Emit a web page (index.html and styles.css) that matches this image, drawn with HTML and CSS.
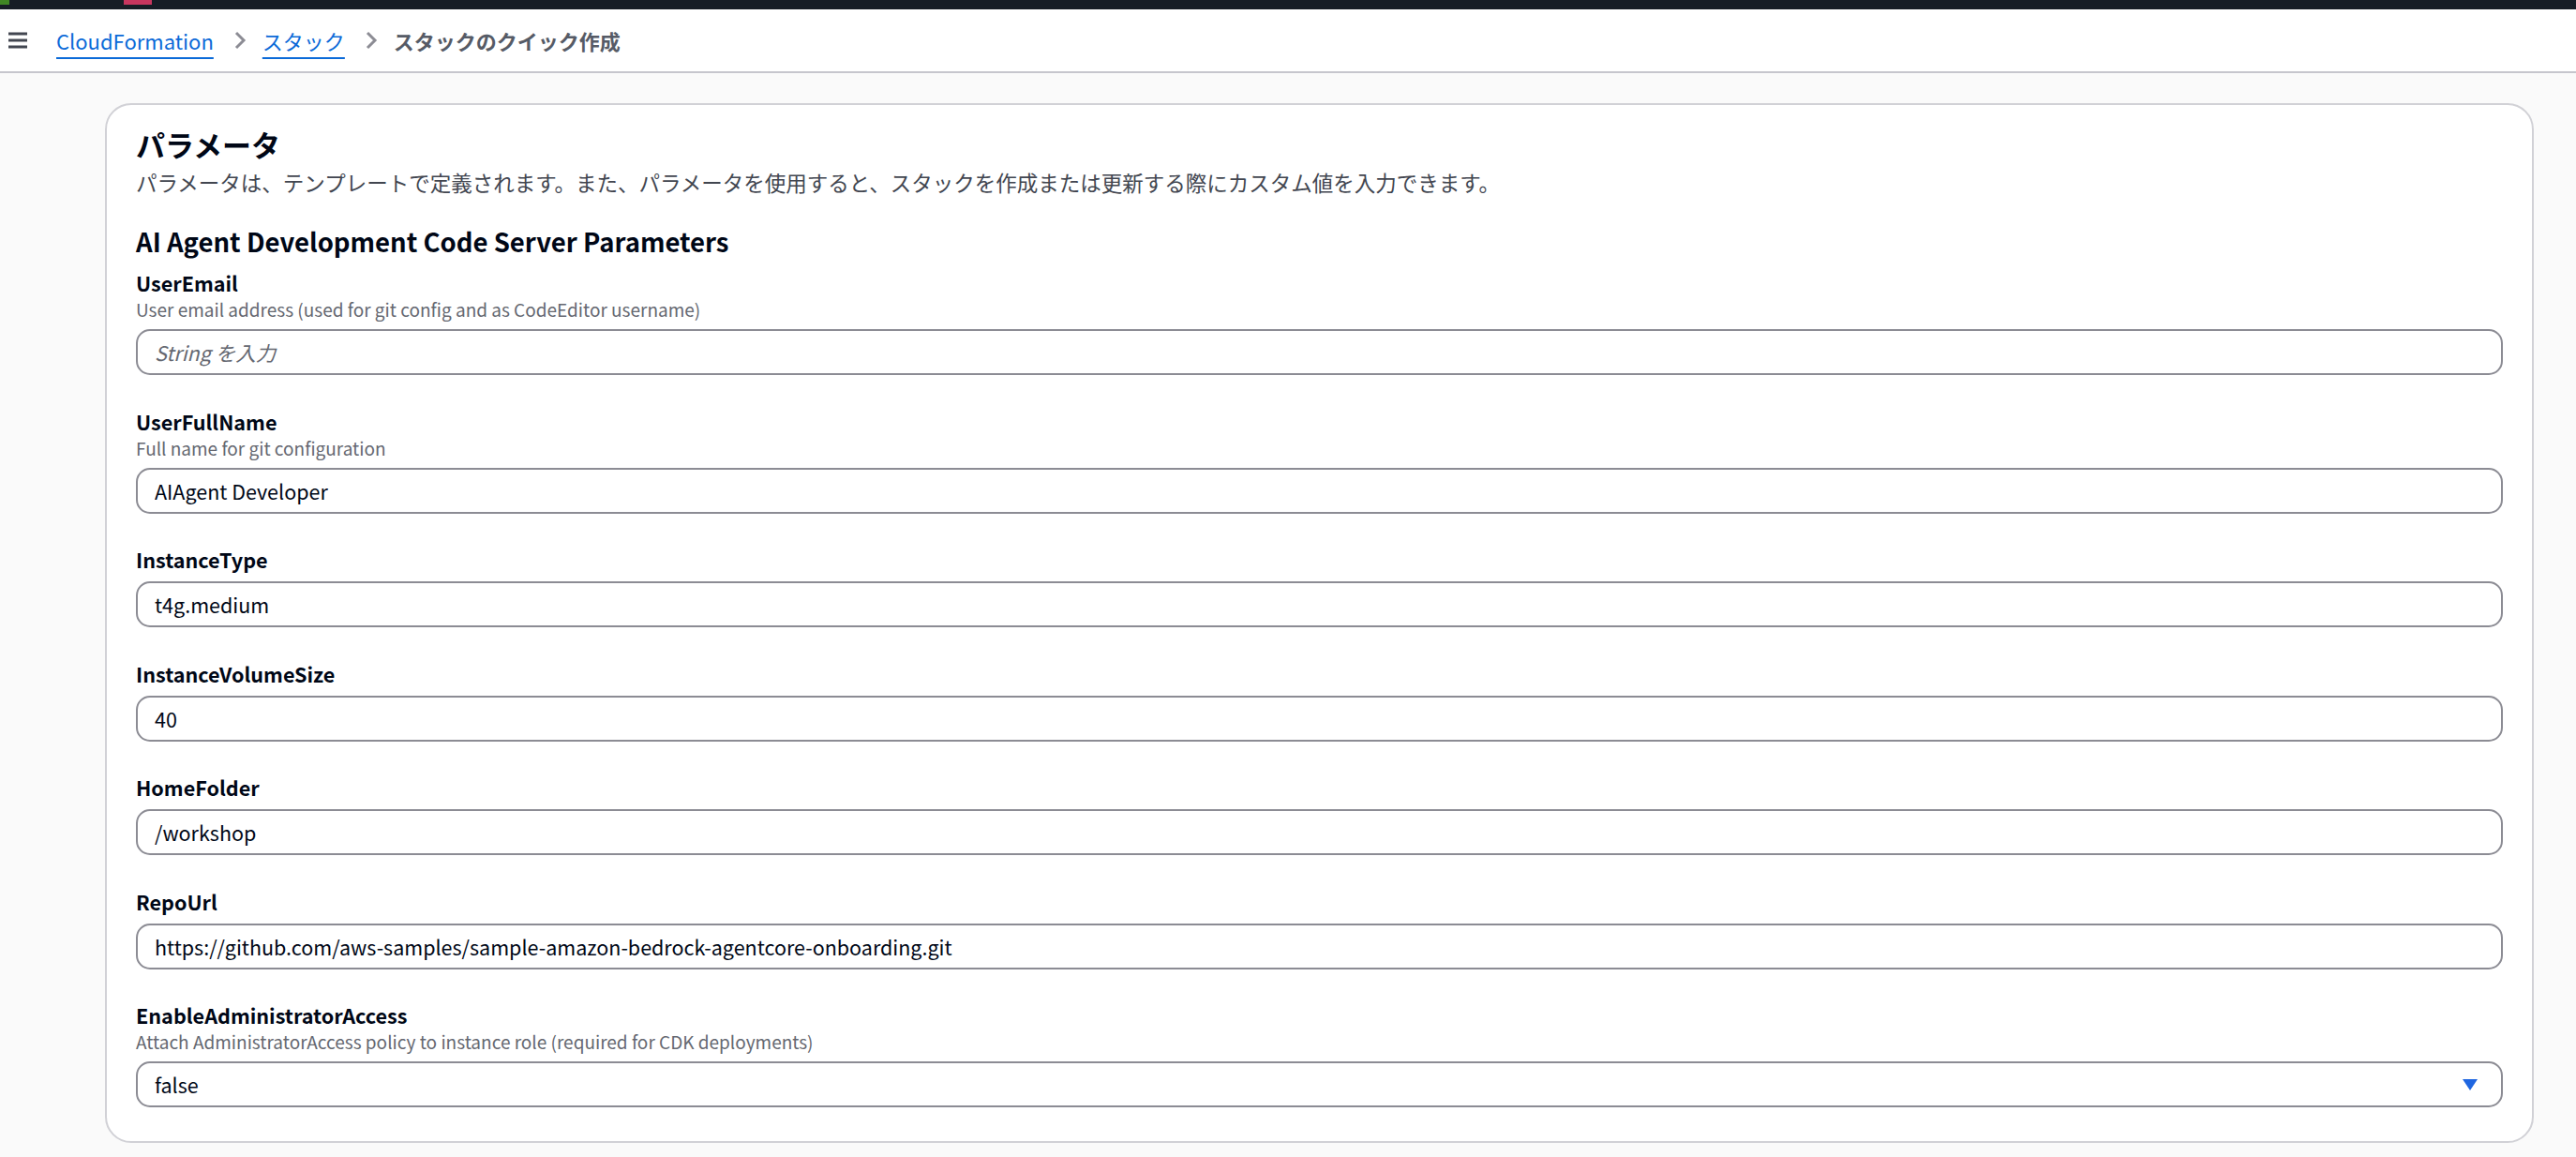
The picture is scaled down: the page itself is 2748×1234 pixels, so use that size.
FILE: index.html
```html
<!DOCTYPE html>
<html lang="ja">
<head>
    <meta charset="UTF-8">
    <meta name="viewport" content="width=device-width, initial-scale=1.0">
    <title>スタックのクイック作成</title>
    <link rel="stylesheet" href="styles.css">
</head>
<body>
    <div class="topbar">
        <span class="tab tab-green"></span>
        <span class="tab tab-pink"></span>
    </div>

    <header class="breadcrumbs">
        <button class="menu-button" aria-label="メニュー">
            <svg width="22" height="20" viewBox="0 0 22 20">
                <path d="M1 3h20M1 10h20M1 17h20" stroke="#424650" stroke-width="3" fill="none"/>
            </svg>
        </button>
        <a href="#" class="crumb-link">CloudFormation</a>
        <span class="crumb-sep">
            <svg width="14" height="22" viewBox="0 0 14 22">
                <path d="M3 3l8 8-8 8" stroke="#8c8c94" stroke-width="3" fill="none"/>
            </svg>
        </span>
        <a href="#" class="crumb-link">スタック</a>
        <span class="crumb-sep">
            <svg width="14" height="22" viewBox="0 0 14 22">
                <path d="M3 3l8 8-8 8" stroke="#8c8c94" stroke-width="3" fill="none"/>
            </svg>
        </span>
        <span class="crumb-current">スタックのクイック作成</span>
    </header>

    <main class="content">
        <section class="card">
            <h1 class="card-title">パラメータ</h1>
            <p class="card-desc">パラメータは、テンプレートで定義されます。また、パラメータを使用すると、スタックを作成または更新する際にカスタム値を入力できます。</p>

            <h2 class="group-title">AI Agent Development Code Server Parameters</h2>

            <div class="field first">
                <label class="field-label">UserEmail</label>
                <div class="field-desc">User email address (used for git config and as CodeEditor username)</div>
                <input class="field-input" type="text" placeholder="String を入力">
            </div>

            <div class="field">
                <label class="field-label">UserFullName</label>
                <div class="field-desc">Full name for git configuration</div>
                <input class="field-input" type="text" value="AIAgent Developer">
            </div>

            <div class="field">
                <label class="field-label">InstanceType</label>
                <input class="field-input" type="text" value="t4g.medium">
            </div>

            <div class="field">
                <label class="field-label">InstanceVolumeSize</label>
                <input class="field-input" type="text" value="40">
            </div>

            <div class="field">
                <label class="field-label">HomeFolder</label>
                <input class="field-input" type="text" value="/workshop">
            </div>

            <div class="field">
                <label class="field-label">RepoUrl</label>
                <input class="field-input" type="text" value="https://github.com/aws-samples/sample-amazon-bedrock-agentcore-onboarding.git">
            </div>

            <div class="field">
                <label class="field-label">EnableAdministratorAccess</label>
                <div class="field-desc">Attach AdministratorAccess policy to instance role (required for CDK deployments)</div>
                <div class="field-select">
                    <span>false</span>
                    <svg class="caret" width="18" height="14" viewBox="0 0 18 14">
                        <path d="M1 1h16L9 13z" fill="#1f66e0"/>
                    </svg>
                </div>
            </div>
        </section>
    </main>
</body>
</html>
```

FILE: styles.css
```css
body {
    margin: 0;
    font-family: "Noto Sans CJK JP", "Noto Sans", sans-serif;
    background-color: #fafafa;
    color: #000716;
    height: 1234px;
    overflow: hidden;
}
.topbar {
    height: 10px;
    background-color: #161d26;
    display: flex;
}
.tab {
    height: 5px;
}
.tab-green {
    width: 10px;
    background-color: #3f8624;
}
.tab-pink {
    width: 30px;
    margin-left: 122px;
    background-color: #c7365f;
}
.breadcrumbs {
    height: 66px;
    background-color: white;
    border-bottom: 2px solid #c6c6cd;
    display: flex;
    align-items: center;
    padding-left: 8px;
    font-size: 22px;
}
.menu-button {
    background: none;
    border: none;
    padding: 0;
    margin-right: 30px;
    display: flex;
}
.crumb-link {
    color: #0b6ad8;
    text-decoration: underline;
    text-decoration-thickness: 2px;
    text-underline-offset: 8px;
}
.crumb-sep {
    display: flex;
    margin: 0 17px 0 21px;
}
.crumb-current {
    color: #565b66;
    font-weight: bold;
}
.content {
    padding: 32px 45px 0 112px;
}
.card {
    background-color: white;
    border: 2px solid #d1d1d6;
    border-radius: 28px;
    padding: 18px 31px 36px 31px;
}
.card-title {
    margin: 0;
    font-size: 31px;
    line-height: 48px;
    font-weight: bold;
}
.card-desc {
    margin: 0;
    font-size: 22.5px;
    line-height: 32px;
    color: #424650;
}
.group-title {
    margin: 29px 0 0 0;
    font-size: 27.5px;
    line-height: 36px;
    font-weight: bold;
}
.field {
    margin-top: 34.5px;
}
.field.first {
    margin-top: 12px;
}
.field-label {
    display: block;
    font-size: 21.6px;
    line-height: 30px;
    font-weight: bold;
}
.field-desc {
    font-size: 19px;
    line-height: 26px;
    color: #656871;
}
.field-input, .field-select {
    display: block;
    box-sizing: border-box;
    width: 100%;
    height: 49px;
    margin-top: 8px;
    padding: 0 18px;
    border: 2px solid #8c8c94;
    border-radius: 15px;
    font-family: inherit;
    font-size: 21.5px;
    color: #000716;
    background-color: white;
}
.field-input::placeholder {
    color: #656871;
    font-style: italic;
}
.field-select {
    display: flex;
    align-items: center;
    justify-content: space-between;
    padding-right: 24px;
}
```
